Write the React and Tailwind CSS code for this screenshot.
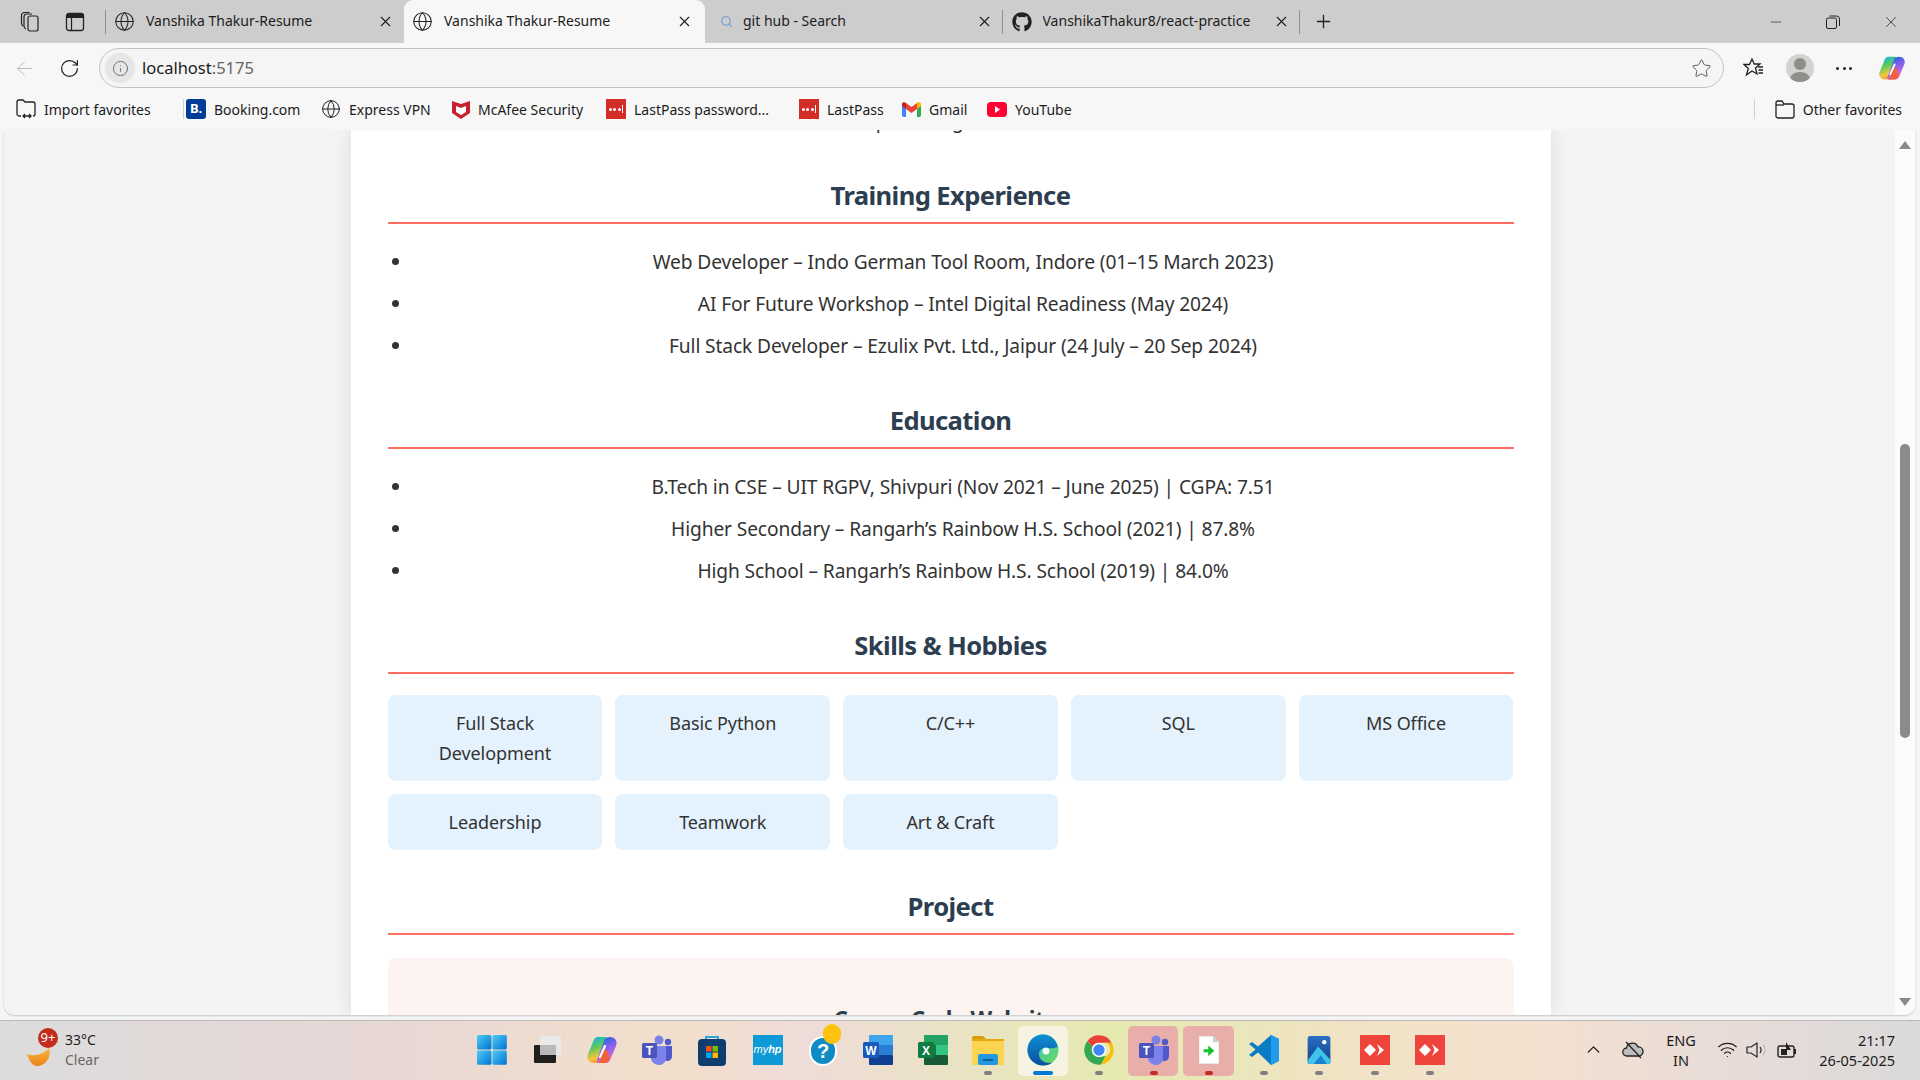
import { Globe, X, ArrowLeft, RotateCw, Info, Star, Plus, Search, Minus, ChevronUp, Wifi } from "lucide-react";
import { FaGithub } from "react-icons/fa";

const training = [
  "Web Developer – Indo German Tool Room, Indore (01–15 March 2023)",
  "AI For Future Workshop – Intel Digital Readiness (May 2024)",
  "Full Stack Developer – Ezulix Pvt. Ltd., Jaipur (24 July – 20 Sep 2024)",
];
const education = [
  "B.Tech in CSE – UIT RGPV, Shivpuri (Nov 2021 – June 2025) | CGPA: 7.51",
  "Higher Secondary – Rangarh’s Rainbow H.S. School (2021) | 87.8%",
  "High School – Rangarh’s Rainbow H.S. School (2019) | 84.0%",
];
const skills = ["Full Stack Development", "Basic Python", "C/C++", "SQL", "MS Office", "Leadership", "Teamwork", "Art & Craft"];

const CopilotIcon = ({ size = 26, id = "cp" }) => (
  <svg width={size} height={size} viewBox="0 0 32 32">
    <defs>
      <linearGradient id={`${id}A`} x1="0.3" y1="0" x2="0.6" y2="1">
        <stop offset="0" stopColor="#14b4dc" />
        <stop offset="0.4" stopColor="#5fcb5c" />
        <stop offset="0.75" stopColor="#f7c63c" />
        <stop offset="1" stopColor="#f58a3c" />
      </linearGradient>
      <linearGradient id={`${id}B`} x1="0.3" y1="0" x2="0.7" y2="1">
        <stop offset="0" stopColor="#1468e0" />
        <stop offset="0.45" stopColor="#8a5fec" />
        <stop offset="1" stopColor="#ee7ac8" />
      </linearGradient>
    </defs>
    <path d="M12 3H19C21 3 22 4 21 6L14 25C13 28 11 29 8 29C3 29 0 25 2 20L7 8C8 5 9 3 12 3Z" fill={`url(#${id}A)`} />
    <path d="M20 29H13C11 29 10 28 11 26L18 7C19 4 21 3 24 3C29 3 32 7 30 12L25 24C24 27 23 29 20 29Z" fill={`url(#${id}B)`} />
    <path d="M17 16L14 25C13 28 12 29 10 29H19C22 29 23 26 24 24L21 16Z" fill="#f2603c" />
    <path d="M19 12L14 23" stroke="#fff" strokeWidth="2.200" strokeLinecap="round" />
  </svg>
);

const WindowsIcon = () => (
  <svg width="30" height="30" viewBox="0 0 30 30">
    <defs>
      <linearGradient id="winA" x1="0" y1="0" x2="1" y2="1">
        <stop offset="0" stopColor="#4fcdf8" />
        <stop offset="1" stopColor="#0072d0" />
      </linearGradient>
    </defs>
    <rect width="14.4" height="14.4" x="0" y="0" rx="1.5" fill="url(#winA)" />
    <rect width="14.4" height="14.4" x="15.4" y="0" rx="1.5" fill="url(#winA)" />
    <rect width="14.4" height="14.4" x="0" y="15.4" rx="1.5" fill="url(#winA)" />
    <rect width="14.4" height="14.4" x="15.4" y="15.4" rx="1.5" fill="url(#winA)" />
  </svg>
);

const TaskViewIcon = () => (
  <svg width="30" height="30" viewBox="0 0 30 30">
    <rect x="2" y="10" width="22" height="18" rx="1" fill="#1f1f1f" />
    <rect x="8" y="1" width="21" height="19" rx="1" fill="#e9e9e9" />
    <rect x="8" y="10" width="16" height="10" fill="#b9b9b9" />
  </svg>
);

const TeamsIcon = () => (
  <svg width="32" height="32" viewBox="0 0 32 32">
    <circle cx="18" cy="6" r="4.5" fill="#7b83eb" />
    <circle cx="27" cy="8" r="3.2" fill="#5059c9" />
    <path d="M22 12h9v10c0 3-2 5-5 5-2 0-4-1-4-3z" fill="#5059c9" />
    <path d="M10 12h15v12c0 4-3 7-7 7-4 0-8-3-8-7z" fill="#7b83eb" />
    <rect x="1" y="9" width="15" height="15" rx="1.5" fill="#4b53bc" />
    <text x="8.5" y="21" textAnchor="middle" fontSize="12" fontWeight="700" fill="#fff" fontFamily="Liberation Sans, sans-serif">T</text>
  </svg>
);

const StoreIcon = () => (
  <svg width="28" height="32" viewBox="0 0 28 32">
    <path d="M8 6V3h12v3" fill="none" stroke="#27a5dc" strokeWidth="2" />
    <rect x="0" y="5" width="28" height="27" rx="4" fill="#103d6f" />
    <rect x="8" y="12" width="5.5" height="5.5" fill="#f25022" />
    <rect x="14.5" y="12" width="5.5" height="5.5" fill="#7fba00" />
    <rect x="8" y="18.5" width="5.5" height="5.5" fill="#00a4ef" />
    <rect x="14.5" y="18.5" width="5.5" height="5.5" fill="#ffb900" />
  </svg>
);

const HpIcon = () => (
  <div className="flex h-[30px] w-[30px] items-center justify-center bg-[#0e9ad6] font-['Liberation_Sans',sans-serif] text-[11px] italic text-white">
    my<b>hp</b>
  </div>
);

const HelpIcon = () => (
  <div className="relative ml-[5px] h-[32px] w-[32px]">
    <div className="mt-[2px] flex h-[30px] w-[28px] items-center justify-center rounded-full border-2 border-white bg-[#0d8bc4] font-['Liberation_Sans',sans-serif] text-[20px] font-bold text-white">
      ?
    </div>
    <div className="absolute right-0 top-[-10px] h-[20px] w-[18px] rounded-full bg-[#ffc20e]" />
  </div>
);

const WordIcon = () => (
  <svg width="30" height="30" viewBox="0 0 30 30">
    <rect x="6" y="0" width="24" height="10" rx="1" fill="#41a5ee" />
    <rect x="6" y="10" width="24" height="10" fill="#2b7cd3" />
    <rect x="6" y="20" width="24" height="10" rx="1" fill="#103f91" />
    <rect x="0" y="7" width="16" height="16" rx="1.5" fill="#185abd" />
    <text x="8" y="20" textAnchor="middle" fontSize="12" fontWeight="700" fill="#fff" fontFamily="Liberation Sans, sans-serif">W</text>
  </svg>
);

const ExcelIcon = () => (
  <svg width="30" height="30" viewBox="0 0 30 30">
    <rect x="6" y="0" width="24" height="10" rx="1" fill="#21a366" />
    <rect x="6" y="10" width="12" height="10" fill="#107c41" />
    <rect x="18" y="10" width="12" height="10" fill="#33c481" />
    <rect x="6" y="20" width="24" height="10" rx="1" fill="#185c37" />
    <rect x="0" y="7" width="16" height="16" rx="1.5" fill="#107c41" />
    <text x="8" y="20" textAnchor="middle" fontSize="12" fontWeight="700" fill="#fff" fontFamily="Liberation Sans, sans-serif">X</text>
  </svg>
);

const FilesIcon = () => (
  <svg width="32" height="30" viewBox="0 0 32 30">
    <path d="M0 3c0-1.5 1-2 2-2h9l3 3h-14z" fill="#d69d0b" />
    <rect x="0" y="4" width="32" height="26" rx="1.5" fill="#fbd452" />
    <rect x="0" y="4" width="32" height="2" fill="#e8a90f" />
    <rect x="6" y="19" width="20" height="11" rx="2" fill="#2297e2" />
    <rect x="11" y="24" width="10" height="2" fill="#0e5c9a" />
  </svg>
);

const EdgeIcon = () => (
  <svg width="32" height="32" viewBox="0 0 32 32">
    <defs>
      <linearGradient id="edgeA" x1="0" y1="0" x2="1" y2="1">
        <stop offset="0" stopColor="#2bc3d0" />
        <stop offset="1" stopColor="#6fd85c" />
      </linearGradient>
      <linearGradient id="edgeB" x1="0" y1="0" x2="0" y2="1">
        <stop offset="0" stopColor="#0c8fd4" />
        <stop offset="1" stopColor="#0b4f9e" />
      </linearGradient>
    </defs>
    <circle cx="16" cy="16" r="15.5" fill="url(#edgeA)" />
    <path d="M16 .5C7 .5.5 7.5.5 16c0 8.500 7 15.500 15.500 15.500 4 0 7-1 9.500-3-6 1.500-13-1-13.500-8-.3-4 3-6.500 6-6.500 4 0 7 1 12.500-1C30 7 24 .5 16 .5z" fill="url(#edgeB)" />
    <circle cx="19" cy="17" r="3.500" fill="#fff" opacity="0.9" />
  </svg>
);

const ChromeIcon = () => (
  <svg width="32" height="32" viewBox="0 0 48 48">
    <path d="M24 2a22 22 0 0 1 19 11H24a11 11 0 0 0-10 6L6.500 10.500A22 22 0 0 1 24 2z" fill="#ea4335" />
    <path d="M43 13a22 22 0 0 1-16 32.800L35 33a11 11 0 0 0-1-20z" fill="#fbbc05" />
    <path d="M27 45.800A22 22 0 0 1 6.500 10.500L14 19a11 11 0 0 0 13 15l7-1z" fill="#34a853" />
    <circle cx="24" cy="24" r="10.500" fill="#fff" />
    <circle cx="24" cy="24" r="8.500" fill="#4285f4" />
  </svg>
);

const FileArrowIcon = () => (
  <svg width="20" height="28" viewBox="0 0 26 36">
    <path d="M0 0h18l8 8v28H0z" fill="#fff" stroke="#ddd" />
    <path d="M18 0l8 8h-8z" fill="#cfcfcf" />
    <path d="M6 17h6v-5l8 7-8 7v-5H6z" fill="#12c12c" />
  </svg>
);

const VsCodeIcon = () => (
  <svg width="32" height="32" viewBox="0 0 32 32">
    <path d="M23 1l8 4v22l-8 4-13-12.500-6 4.500-3-2 6.500-5.500L1 10l3-2 6 4.500z" fill="#0a7cc4" />
    <path d="M23 1l8 4v22l-8 4z" fill="#1f9cf0" />
  </svg>
);

const PhotosIcon = () => (
  <svg width="26" height="28" viewBox="0 0 26 32">
    <defs>
      <linearGradient id="phA" x1="0" y1="0" x2="0" y2="1">
        <stop offset="0" stopColor="#2a6fc4" />
        <stop offset="1" stopColor="#123f85" />
      </linearGradient>
    </defs>
    <rect width="26" height="32" rx="3" fill="url(#phA)" />
    <circle cx="19" cy="7" r="2.500" fill="#fff" />
    <path d="M0 28l12-16 14 15v2c0 2-1 3-3 3H3c-2 0-3-1-3-4z" fill="#3fc3e8" />
    <path d="M7 32l8-10 7 10z" fill="#1c7fd0" />
  </svg>
);

const AnyDeskIcon = () => (
  <div className="flex h-[30px] w-[30px] items-center justify-center bg-[#ef443b]">
    <svg width="22" height="14" viewBox="0 0 22 14">
      <path d="M6 1l6 6-6 6-6-6z" fill="#fff" />
      <path d="M13 1l7 6-7 6 2.500-6z" fill="#fff" />
    </svg>
  </div>
);

const SectionTitle = ({ children }) => (
  <h2 className="border-b-2 border-[#ff6f61] pb-[8px] text-center text-[25.600px] font-bold leading-[36px] tracking-[-0.6px] text-[#2c3e50]">
    {children}
  </h2>
);

const ListSection = ({ items }) => (
  <ul className="mt-[17px] list-disc pl-[25px] text-[#333]">
    {items.map((t) => (
      <li key={t} className="text-center text-[19.200px] leading-[42px] tracking-[-0.12px]">{t}</li>
    ))}
  </ul>
);

const Tab = ({ icon, title, active, divider, iconBox, closeGap }) => (
  <div className={`flex h-full items-center ${active ? "w-[301px] rounded-t-[9px] bg-[#f7f7f7]" : divider ? "w-[297.500px]" : "w-[298px]"}`}>
    <div className={`flex shrink-0 justify-end ${iconBox}`}>{icon}</div>
    <div className="mb-[2px] flex-1 truncate text-[14px] text-[#1c1c1c]">{title}</div>
    <X size={17} strokeWidth={1.5} className={`text-[#1c1c1c] ${closeGap}`} />
    {divider && <div className="h-[24px] w-px bg-[#8e8e8e]" />}
  </div>
);

function LastPassIcon() {
  return (
    <div className="flex h-[20px] w-[20px] items-center justify-center gap-[1.500px] bg-[#d32d27]">
      <span className="h-[3px] w-[3px] rounded-full bg-white" />
      <span className="h-[3px] w-[3px] rounded-full bg-white" />
      <span className="h-[3px] w-[3px] rounded-full bg-white" />
      <span className="h-[8px] w-px bg-white" />
    </div>
  );
}

const bookmarks = [
  { w: "w-[170px]", label: "Import favorites", sep: true, icon: (
    <svg width="20" height="20" viewBox="0 0 20 20" fill="none" stroke="#222" strokeWidth="1.3">
      <path d="M5 17H3a2 2 0 0 1-2-2V3a2 2 0 0 1 2-2h4l2 2h8a2 2 0 0 1 2 2v10a2 2 0 0 1-2 2" />
      <path d="M7 17h8M9 15l-2 2 2 2M13 15l2 2-2 2" />
    </svg>
  ) },
  { w: "w-[135px]", label: "Booking.com", icon: <div className="flex h-[20px] w-[20px] items-center justify-center rounded-[3px] bg-[#003b95] text-[13px] font-bold text-white">B.</div> },
  { w: "w-[131px]", label: "Express VPN", icon: <Globe size={20} strokeWidth={1.2} className="text-[#222]" /> },
  { w: "w-[154px]", label: "McAfee Security", icon: (
    <svg width="18" height="20" viewBox="0 0 18 20">
      <path d="M0 2l9 3 9-3v12l-9 6-9-6z" fill="#c8202f" />
      <path d="M4 7l5 2 5-2v6l-5 3-5-3z" fill="#fff" />
    </svg>
  ) },
  { w: "w-[193px]", label: "LastPass password...", icon: <LastPassIcon /> },
  { w: "w-[103px]", label: "LastPass", icon: <LastPassIcon /> },
  { w: "w-[85px]", label: "Gmail", icon: (
    <svg width="19" height="16" viewBox="0 0 19 16">
      <path d="M0 3v11c0 1 .6 2 2 2h2V7z" fill="#4285f4" />
      <path d="M19 3v11c0 1-.6 2-2 2h-2V7z" fill="#34a853" />
      <path d="M15 2v6l4-3V3c0-2-2.500-3-4-1z" fill="#fbbc04" />
      <path d="M0 5l4 3V2C2.500.5 0 1 0 3z" fill="#c5221f" />
      <path d="M4 2v6l5.500 4L15 8V2L9.500 6z" fill="#ea4335" />
    </svg>
  ) },
  { w: "w-[100px]", label: "YouTube", icon: (
    <svg width="20" height="15" viewBox="0 0 20 15">
      <rect width="20" height="15" rx="4" fill="#ff0033" />
      <path d="M8 4l5 3.500L8 11z" fill="#fff" />
    </svg>
  ) },
];

const taskbarApps = [
  { icon: <WindowsIcon /> },
  { icon: <TaskViewIcon /> },
  { icon: <CopilotIcon size={32} id="cpTask" /> },
  { icon: <TeamsIcon /> },
  { icon: <StoreIcon /> },
  { icon: <HpIcon /> },
  { icon: <HelpIcon /> },
  { icon: <WordIcon /> },
  { icon: <ExcelIcon /> },
  { icon: <FilesIcon />, dot: "gray" },
  { icon: <EdgeIcon />, dot: "blue", bg: "bg-[#f6f3e2]" },
  { icon: <ChromeIcon />, dot: "gray" },
  { icon: <TeamsIcon />, dot: "red", bg: "bg-[#e8aeaa]" },
  { icon: <FileArrowIcon />, dot: "red", bg: "bg-[#e8aeaa]" },
  { icon: <VsCodeIcon />, dot: "gray" },
  { icon: <PhotosIcon />, dot: "gray" },
  { icon: <AnyDeskIcon />, dot: "gray" },
  { icon: <AnyDeskIcon />, dot: "gray" },
];

const App = () => {
  return (
    <div className="flex h-[1080px] w-[1920px] flex-col overflow-hidden bg-[#f5f5f5] font-['Noto_Sans',sans-serif]">
      {/* tab strip */}
      <div className="flex h-[43px] shrink-0 items-center bg-[#cdcdcd]">
        <div className="flex h-full w-[106px] items-center">
          <svg width="22" height="22" viewBox="0 0 22 22" fill="none" stroke="#222" strokeWidth="1.2" className="ml-[20px]">
            <rect x="8" y="5" width="10" height="15" rx="2" />
            <path d="M6 18c-1.500-.5-2-1.500-2-3V6c0-2 1-3 3-3h5" />
            <path d="M3 15c-1-.5-1.500-1-1.500-3V5c0-2 1-3.500 3-3.500h5" />
          </svg>
          <svg width="20" height="20" viewBox="0 0 20 20" className="ml-[23px]">
            <rect x="1.500" y="1.500" width="17" height="17" rx="2.500" fill="none" stroke="#222" strokeWidth="1.300" />
            <path d="M1.500 4a2.500 2.500 0 0 1 2.500-2.500h12A2.500 2.500 0 0 1 18.500 4v2h-17z" fill="#222" />
            <path d="M6.500 6v12" stroke="#222" strokeWidth="1.200" />
          </svg>
          <div className="ml-auto h-[24px] w-px bg-[#8e8e8e]" />
        </div>
        <Tab iconBox="w-[40px] pr-[11px]" closeGap="mr-[10px]" icon={<Globe size={21} strokeWidth={1.2} className="text-[#222]" />} title="Vanshika Thakur-Resume" />
        <Tab active iconBox="w-[40px] pr-[11px]" closeGap="mr-[12px]" icon={<Globe size={21} strokeWidth={1.2} className="text-[#222]" />} title="Vanshika Thakur-Resume" />
        <Tab divider iconBox="w-[38px] pr-[10px]" closeGap="mr-[9px]" icon={<Search size={13} strokeWidth={2.500} className="text-[#7aa7cf]" />} title="git hub - Search" />
        <Tab divider iconBox="w-[40px] pr-[11px]" closeGap="mr-[9px]" icon={<FaGithub size={20} className="text-[#222]" />} title="VanshikaThakur8/react-practice" />
        <Plus size={21} strokeWidth={1.500} className="ml-[13px] text-[#222]" />
        <div className="ml-auto flex items-center pr-[20px]">
          <Minus size={16} strokeWidth={1} className="text-[#222]" />
          <svg width="14" height="14" viewBox="0 0 14 14" fill="none" stroke="#222" className="ml-[42px]">
            <rect x="0.500" y="3" width="10" height="10.500" rx="1.500" />
            <path d="M3.500 1h7a3 3 0 0 1 3 3v7" />
          </svg>
          <X size={18} strokeWidth={1} className="ml-[42px] text-[#222]" />
        </div>
      </div>

      {/* toolbar */}
      <div className="flex h-[45px] shrink-0 items-center bg-[#f7f7f7] pt-[5px]">
        <ArrowLeft size={23} strokeWidth={1} className="ml-[13px] text-[#b5b5b5]" />
        <RotateCw size={21} strokeWidth={1.400} className="ml-[23px] text-[#222]" />
        <div className="ml-[19px] flex h-[40px] w-[1625px] items-center rounded-full border border-[#c4c4c4] bg-[#f5f5f5]">
          <div className="ml-[5px] flex h-[30px] w-[30px] items-center justify-center rounded-full bg-[#e6e6e6]">
            <Info size={17} strokeWidth={1.300} className="text-[#666]" />
          </div>
          <div className="ml-[7px] text-[16.500px] text-[#1c1c1c]">
            localhost<span className="text-[#666]">:5175</span>
          </div>
          <Star size={21} strokeWidth={1.100} className="ml-auto mr-[11px] text-[#555]" />
        </div>
        <svg width="22" height="22" viewBox="0 0 22 22" fill="none" stroke="#222" strokeWidth="1.300" className="ml-[19px]">
          <path d="M9 2l2.200 5H17l-4.500 4 1.500 6-5-3-5.500 4 1.800-6.500L1 7.500h5.500z" />
          <path d="M15 10h5M15.500 13h4.500M15.500 16h4.500" />
        </svg>
        <div className="ml-[21px] flex h-[28px] w-[28px] items-center justify-center overflow-hidden rounded-full bg-[#d3d2ce]">
          <svg width="28" height="28" viewBox="0 0 28 28">
            <circle cx="14" cy="10" r="6" fill="#8f8e8a" />
            <ellipse cx="14" cy="25" rx="10" ry="7" fill="#8f8e8a" />
          </svg>
        </div>
        <div className="ml-[22px] flex gap-[3.500px]">
          <span className="h-[3px] w-[3px] rounded-full bg-[#222]" />
          <span className="h-[3px] w-[3px] rounded-full bg-[#222]" />
          <span className="h-[3px] w-[3px] rounded-full bg-[#222]" />
        </div>
        <div className="ml-[26px]">
          <CopilotIcon size={28} id="cpTool" />
        </div>
      </div>

      {/* favorites bar */}
      <div className="flex h-[42px] shrink-0 items-center bg-[#f7f7f7] pl-[16px] text-[14px] text-[#1c1c1c]">
        {bookmarks.map((b) => (
          <div key={b.label} className={`flex items-center gap-[8px] ${b.w}`}>
            {b.icon}
            <span>{b.label}</span>
            {b.sep && <span className="ml-auto mr-[2px] h-[20px] w-px bg-[#cfcfcf]" />}
          </div>
        ))}
        <div className="ml-auto mr-[18px] flex items-center">
          <span className="mr-[20px] h-[20px] w-px bg-[#cfcfcf]" />
          <svg width="20" height="19" viewBox="0 0 20 19" fill="none" stroke="#222" strokeWidth="1.300" className="mr-[8px]">
            <path d="M1 3a2 2 0 0 1 2-2h4l2 3h8a2 2 0 0 1 2 2v10a2 2 0 0 1-2 2H3a2 2 0 0 1-2-2z" />
            <path d="M1 5h8" />
          </svg>
          <span>Other favorites</span>
        </div>
      </div>

      {/* page */}
      <div className="flex min-h-0 flex-1 pl-[4px] pr-[5px]">
        <div className="flex h-[885px] min-w-0 flex-1 overflow-hidden rounded-b-[10px] bg-[#f4f4f4] shadow-[0_1px_2px_rgba(0,0,0,0.2)]">
          <div className="min-w-0 flex-1 overflow-hidden pl-[2px]">
            <div className="mx-auto h-[885px] w-[1200px] overflow-hidden bg-white px-[37px] shadow-[0_0_20px_rgba(0,0,0,0.1)]">
              <div className="-mt-[19px] ml-[468px] text-[19.200px] leading-[20px] tracking-[-0.3px] text-[#333]">Top Ranking</div>
              <div className="mt-[47px]">
                <SectionTitle>Training Experience</SectionTitle>
                <ListSection items={training} />
              </div>
              <div className="mt-[36px]">
                <SectionTitle>Education</SectionTitle>
                <ListSection items={education} />
              </div>
              <div className="mt-[36px]">
                <SectionTitle>Skills &amp; Hobbies</SectionTitle>
                <div className="mt-[21px] grid grid-cols-5 gap-[12.800px]">
                  {skills.map((s) => (
                    <div key={s} className="rounded-[8px] bg-[#e3f2fd] px-[16px] py-[13px] text-center text-[18px] leading-[30px] tracking-[-0.1px] text-[#333]">
                      {s}
                    </div>
                  ))}
                </div>
              </div>
              <div className="mt-[39px]">
                <SectionTitle>Project</SectionTitle>
                <div className="mt-[23px] h-[200px] rounded-[8px] bg-[#fdf3f1] pr-[10px] pt-[45px] text-center text-[22.400px] font-bold tracking-[-0.4px] text-[#2c3e50]">
                  Career Code Website
                </div>
              </div>
            </div>
          </div>
          {/* scrollbar */}
          <div className="flex w-[20px] shrink-0 flex-col items-center bg-[#fbfbfb]">
            <div className="mt-[11px] h-0 w-0 border-x-[6px] border-b-[8px] border-x-transparent border-b-[#8a8a8a]" />
            <div className="mt-[295px] h-[294px] w-[10px] rounded-full bg-[#8b8b8b]" />
            <div className="mt-auto mb-[9px] h-0 w-0 border-x-[6px] border-t-[8px] border-x-transparent border-t-[#8a8a8a]" />
          </div>
        </div>
      </div>

      {/* taskbar */}
      <div className="flex h-[60px] shrink-0 items-center border-t border-[#b9b9b9] bg-[linear-gradient(90deg,#dcdcdc_0%,#e8d8d6_20%,#f2dfcb_35%,#eedcd8_42%,#e6eab0_58%,#f0e3c4_70%,#f3e1d0_80%,#e8dcd8_90%,#dadada_100%)]">
        <div className="flex w-[464px] shrink-0 items-center pb-[2px]">
          <div className="relative ml-[26px] h-[40px] w-[39px]">
            <svg width="26" height="20" viewBox="0 0 26 20" className="absolute left-[1px] top-[18px]">
              <defs>
                <linearGradient id="moonA" x1="0" y1="0" x2="0" y2="1">
                  <stop offset="0" stopColor="#f7b83c" />
                  <stop offset="1" stopColor="#ee7f1a" />
                </linearGradient>
              </defs>
              <path d="M0 6C7 9 17 6 22 0C25 8 19 18 10 18C5 18 2 12 0 6Z" fill="url(#moonA)" />
            </svg>
            <div className="absolute left-[12px] top-[-2px] flex h-[20px] w-[20px] items-center justify-center rounded-full bg-[#c42b1c] text-[13px] leading-none text-white">9+</div>
          </div>
          <div className="text-[14px] leading-[20px]">
            <div className="text-[#1c1c1c]">33°C</div>
            <div className="text-[#666]">Clear</div>
          </div>
        </div>
        <div className="flex items-center">
          {taskbarApps.map((app, i) => (
            <div key={i} className="relative flex h-[50px] w-[55.200px] items-center justify-center">
              {app.bg && <div className={`absolute inset-y-0 left-[2px] right-[3px] rounded-[5px] ${app.bg}`} />}
              <div className="relative mb-[2px] flex h-[36px] items-center justify-center">{app.icon}</div>
              {app.dot === "gray" && <div className="absolute bottom-[1px] h-[4px] w-[8px] rounded-full bg-[#7f7f7f]" />}
              {app.dot === "red" && <div className="absolute bottom-[1px] h-[4px] w-[8px] rounded-full bg-[#c42b1c]" />}
              {app.dot === "blue" && <div className="absolute bottom-[1px] h-[4px] w-[20px] rounded-full bg-[#0078d4]" />}
            </div>
          ))}
        </div>
        <div className="ml-auto flex items-center pb-[2px] pr-[25px] text-[14.500px] leading-[20px] text-[#1c1c1c]">
          <ChevronUp size={21} strokeWidth={1.600} />
          <svg width="22" height="20" viewBox="0 0 22 20" className="ml-[18.500px]">
            <path d="M5 16a4 4 0 0 1-.5-8 6 6 0 0 1 11.500-1 4.500 4.500 0 0 1 1 9z" fill="#bdbdbd" stroke="#222" strokeWidth="1.300" />
            <path d="M4 2l15 16" stroke="#222" strokeWidth="1.300" />
          </svg>
          <div className="ml-[12px] w-[50px] text-center">
            <div>ENG</div>
            <div>IN</div>
          </div>
          <Wifi size={21} strokeWidth={1.400} className="ml-[10.500px]" />
          <svg width="22" height="18" viewBox="0 0 22 18" fill="none" stroke="#222" strokeWidth="1.200" className="ml-[8.500px]">
            <path d="M1 6h4l6-4v14l-6-4H1z" />
            <path d="M14 6c1.500 2 1.500 4 0 6" />
            <path d="M17 4c2.500 3 2.500 7 0 10" stroke="#bbb" />
          </svg>
          <svg width="20" height="18" viewBox="0 0 20 18" className="ml-[9px]">
            <rect x="1" y="5" width="16" height="11" rx="2" fill="none" stroke="#222" strokeWidth="1.400" />
            <rect x="17" y="8" width="2" height="5" fill="#222" />
            <path d="M4 8h5V1l5 8h-4v5H4z" fill="#222" />
          </svg>
          <div className="ml-[18px] w-[80px] text-right">
            <div>21:17</div>
            <div>26-05-2025</div>
          </div>
        </div>
      </div>
    </div>
  );
};

export default App;
